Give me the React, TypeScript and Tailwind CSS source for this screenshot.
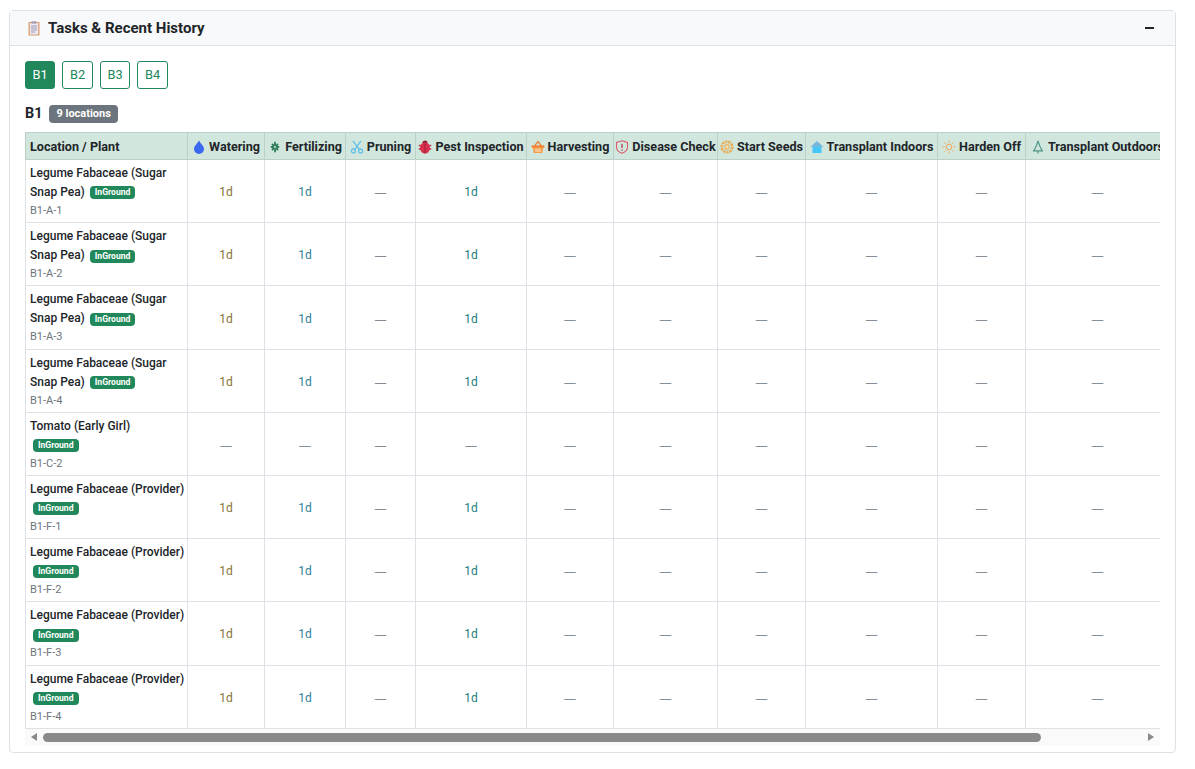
const font = "font-['Roboto','Noto_Sans',sans-serif]";

const columns: { label: string; width: number; icon: string }[] = [
  { label: "Watering", width: 77, icon: "drop" },
  { label: "Fertilizing", width: 81, icon: "herb" },
  { label: "Pruning", width: 70, icon: "scissors" },
  { label: "Pest Inspection", width: 111, icon: "bug" },
  { label: "Harvesting", width: 87, icon: "basket" },
  { label: "Disease Check", width: 104, icon: "shield" },
  { label: "Start Seeds", width: 88, icon: "flower" },
  { label: "Transplant Indoors", width: 132, icon: "house" },
  { label: "Harden Off", width: 88, icon: "sun" },
  { label: "Transplant Outdoors", width: 144, icon: "tree" },
];

const rows = [
  { name: ["Legume Fabaceae (Sugar", "Snap Pea)"], inline: true, loc: "B1-A-1", due: true },
  { name: ["Legume Fabaceae (Sugar", "Snap Pea)"], inline: true, loc: "B1-A-2", due: true },
  { name: ["Legume Fabaceae (Sugar", "Snap Pea)"], inline: true, loc: "B1-A-3", due: true },
  { name: ["Legume Fabaceae (Sugar", "Snap Pea)"], inline: true, loc: "B1-A-4", due: true },
  { name: ["Tomato (Early Girl)"], inline: false, loc: "B1-C-2", due: false },
  { name: ["Legume Fabaceae (Provider)"], inline: false, loc: "B1-F-1", due: true },
  { name: ["Legume Fabaceae (Provider)"], inline: false, loc: "B1-F-2", due: true },
  { name: ["Legume Fabaceae (Provider)"], inline: false, loc: "B1-F-3", due: true },
  { name: ["Legume Fabaceae (Provider)"], inline: false, loc: "B1-F-4", due: true },
];

function Icon({ name }: { name: string }) {
  const cls = "w-[14px] h-[14px] shrink-0";
  switch (name) {
    case "drop":
      return (
        <svg viewBox="0 0 14 14" className={cls}>
          <path d="M7 .5C8.500 3.500 12 6 12 9a5 5 0 0 1-10 0C2 6 5.500 3.500 7 .5Z" fill="#3b68f0" />
        </svg>
      );
    case "herb":
      return (
        <svg viewBox="0 0 14 14" className={cls}>
          <path d="M7 2.500v9M4.500 4.500l5 5M9.500 4.500l-5 5M3.500 7h7" stroke="#2f7d5c" strokeWidth="1.800" strokeLinecap="round" />
          <circle cx="7" cy="7" r="1.200" fill="#a5d2b8" />
        </svg>
      );
    case "scissors":
      return (
        <svg viewBox="0 0 14 14" className={cls} fill="none" stroke="#63c0e8" strokeWidth="1.300">
          <path d="M3 .8l6.200 8.600M11 .8L4.800 9.400" />
          <circle cx="3.400" cy="11" r="2" />
          <circle cx="10.600" cy="11" r="2" />
        </svg>
      );
    case "bug":
      return (
        <svg viewBox="0 0 14 14" className={cls}>
          <path d="M.8 5.500h2M13.200 5.500h-2M.8 9h2M13.200 9h-2" stroke="#c22c44" strokeWidth="1.300" />
          <circle cx="7" cy="3" r="2.600" fill="#8a2236" />
          <ellipse cx="7" cy="8" rx="5" ry="5.500" fill="#d92f4c" />
          <path d="M7 3.500v10" stroke="#8a2236" strokeWidth=".8" />
        </svg>
      );
    case "basket":
      return (
        <svg viewBox="0 0 14 14" className={cls}>
          <path d="M3.500 6 7 1.500 10.500 6" fill="none" stroke="#e8833a" strokeWidth="1.300" />
          <rect x=".5" y="5.500" width="13" height="2.200" rx=".8" fill="#f07f28" />
          <path d="M1.800 7.500h10.400l-1 5.500H2.800Z" fill="#f59a45" />
          <path d="M5 8.500v3.500M7 8.500v3.500M9 8.500v3.500" stroke="#fff" strokeWidth=".8" />
        </svg>
      );
    case "shield":
      return (
        <svg viewBox="0 0 14 14" className={cls} fill="none">
          <path d="M7 .8 12.500 2.500V7c0 3-2.500 5.200-5.500 6.300C4 12.200 1.500 10 1.500 7V2.500Z" stroke="#d9596a" strokeWidth="1.100" />
          <path d="M7 3.800v4.200" stroke="#b23a4a" strokeWidth="1.300" />
          <circle cx="7" cy="10" r=".8" fill="#b23a4a" />
        </svg>
      );
    case "flower":
      return (
        <svg viewBox="0 0 14 14" className={cls} fill="none">
          <circle cx="7" cy="7" r="5.300" stroke="#e8ae55" strokeWidth="2.600" strokeDasharray="2.400 .8" />
          <circle cx="7" cy="7" r="2.400" fill="#f5dba6" stroke="#d99a3c" strokeWidth=".8" />
        </svg>
      );
    case "house":
      return (
        <svg viewBox="0 0 14 14" className={cls}>
          <rect x="2.500" y="6" width="9" height="7" fill="#45c8f5" />
          <path d="M7 1 13.500 7H.5Z" fill="#74b6dc" />
        </svg>
      );
    case "sun":
      return (
        <svg viewBox="0 0 14 14" className={cls} fill="none" stroke="#f2a65e" strokeWidth="1">
          <circle cx="7" cy="7" r="2.800" />
          <path d="M7 .5v2M7 11.500v2M.5 7h2M11.500 7h2M2.400 2.400l1.400 1.400M10.200 10.200l1.400 1.400M11.600 2.400l-1.400 1.400M3.800 10.200l-1.400 1.400" />
        </svg>
      );
    case "tree":
      return (
        <svg viewBox="0 0 14 14" className={cls} fill="none" stroke="#4f9488" strokeWidth="1.200">
          <path d="M7 .8C7.800 4 8.800 7 11.300 10.800H2.700C5.200 7 6.200 4 7 .8ZM7 10.800v2.700" />
        </svg>
      );
    default:
      return null;
  }
}

function ClipboardIcon() {
  return (
    <svg viewBox="0 0 12 15" className="w-[12px] h-[15px] shrink-0">
      <rect x=".5" y="1" width="11" height="13.500" rx=".8" fill="#dc9a6a" />
      <rect x="1.800" y="2" width="8.400" height="11.500" fill="#ece8f2" />
      <rect x="3.500" y=".3" width="5" height="2.400" fill="#a8a0b4" />
      <path d="M3 5h6M3 7h6M3 9h6M3 11h4" stroke="#9a92ac" strokeWidth=".9" />
    </svg>
  );
}

function Badge() {
  return (
    <span className="inline-block rounded-[4px] bg-[#20885a] px-[5px] py-[2px] align-middle text-[8.600px] font-bold leading-[9px] text-white">
      InGround
    </span>
  );
}

function Due({ kind }: { kind: "amber" | "blue" | "teal" }) {
  const color = kind === "amber" ? "text-[#857336]" : kind === "blue" ? "text-[#2f7f9a]" : "text-[#238080]";
  return <span className={`text-[12px] ${color}`}>1d</span>;
}

const Dash = () => <span className="font-['Liberation_Sans',sans-serif] text-[11.500px] text-[#6c757d]">—</span>;

export default function App() {
  return (
    <div className={`${font} min-h-screen bg-white pt-[10px] pl-[9px] pr-[19px] text-[#212529]`}>
      <div className="rounded-[4px] border border-[#dee2e6] bg-white">
        <div className="flex h-[35px] items-center justify-between border-b border-[#dee2e6] bg-[#f8f9fa] pl-[18px] pr-[21px]">
          <div className="flex items-center gap-[8px] pt-[1px] text-[15px] font-bold">
            <ClipboardIcon />
            Tasks &amp; Recent History
          </div>
          <span className="h-[2px] w-[9px] bg-[#212529]" />
        </div>

        <div className="px-[15px] pt-[15px] pb-[6px]">
          <div className="flex gap-[7px]">
            {["B1", "B2", "B3", "B4"].map((b, i) => (
              <button
                key={b}
                className={`h-[28px] rounded-[3px] border border-[#20885a] text-[12.800px] ${i % 2 === 0 ? "w-[30px]" : "w-[31px]"} ${
                  i === 0 ? "bg-[#20885a] text-white" : "bg-white text-[#20885a]"
                }`}
              >
                {b}
              </button>
            ))}
          </div>

          <div className="mt-[16px] flex h-[18px] items-center gap-[7px]">
            <span className="text-[14.400px] font-bold">B1</span>
            <span className="rounded-[4px] bg-[#6c757d] px-[7px] py-[3px] text-[11px] font-bold leading-[12px] text-white">
              9 locations
            </span>
          </div>

          <div className="mt-[9px] overflow-hidden">
            <table className="w-[1144px] table-fixed border-collapse text-[12.600px]">
              <colgroup>
                <col className="w-[162px]" />
                {columns.map((c) => (
                  <col key={c.label} style={{ width: c.width }} />
                ))}
              </colgroup>
              <thead>
                <tr className="h-[27px] bg-[#d1e7dd]">
                  <th className="border border-[#bcd0c7] px-[4px] pt-[2px] text-left font-bold whitespace-nowrap">Location / Plant</th>
                  {columns.map((c) => (
                    <th key={c.label} className="overflow-hidden border border-[#bcd0c7] px-[4px] pt-[2px] font-bold whitespace-nowrap">
                      <span className="flex items-center justify-center gap-[3px]">
                        <Icon name={c.icon} />
                        {c.label}
                      </span>
                    </th>
                  ))}
                </tr>
              </thead>
              <tbody>
                {rows.map((r) => (
                  <tr key={r.loc} className="h-[63.200px]">
                    <td className="border border-[#dee2e6] px-[4px] pt-[4px] align-top text-[12px] leading-[19px] whitespace-nowrap">
                      <div className="font-medium">{r.name[0]}</div>
                      <div className="font-medium">
                        {r.name[1] && <span className="mr-[5px]">{r.name[1]}</span>}
                        <span className={r.inline ? "" : "ml-[3px]"}>
                          <Badge />
                        </span>
                      </div>
                      <div className="text-[11px] leading-[18px] text-[#6c757d]">{r.loc}</div>
                    </td>
                    {columns.map((c, i) => (
                      <td key={c.label} className="border border-[#dee2e6] pt-[3px] text-center">
                        {r.due && i === 0 && <Due kind="amber" />}
                        {r.due && i === 1 && <Due kind="blue" />}
                        {r.due && i === 3 && <Due kind="teal" />}
                        {(!r.due || (i !== 0 && i !== 1 && i !== 3)) && <Dash />}
                      </td>
                    ))}
                  </tr>
                ))}
              </tbody>
            </table>
          </div>

          {/* scrollbar */}
          <div className="flex h-[17px] items-center bg-[#fafafa] px-[6px]">
            <span className="h-0 w-0 border-y-[4px] border-r-[6px] border-y-transparent border-r-[#8a8a8a]" />
            <div className="ml-[6px] h-[9px] w-[998px] rounded-full bg-[#8a8a8a]" />
            <span className="ml-auto h-0 w-0 border-y-[4px] border-l-[6px] border-y-transparent border-l-[#8a8a8a]" />
          </div>
        </div>
      </div>
    </div>
  );
}
